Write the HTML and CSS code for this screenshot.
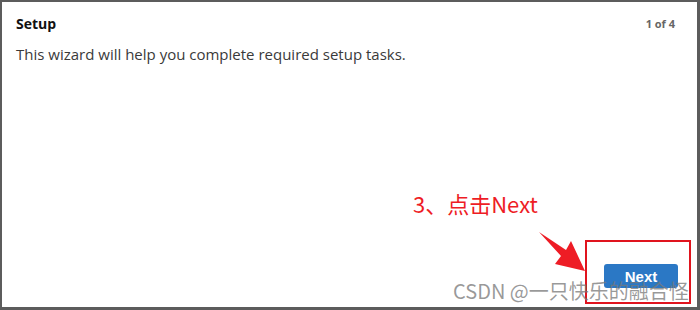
FILE: index.html
```html
<!DOCTYPE html>
<html lang="en">
  <head>
    <meta charset="UTF-8" />
    <title>Setup</title>
    <link rel="stylesheet" href="styles.css">
  </head>
  <body>
    <div class="wizard">
      <div class="wizard-header">
        <h2 class="wizard-title">Setup</h2>
        <span class="wizard-step">1 of 4</span>
      </div>
      <p class="wizard-text">This wizard will help you complete required setup tasks.</p>
      <div class="wizard-footer">
        <button class="btn-next">Next</button>
      </div>

      <div class="note">3、点击Next</div>
      <svg class="arrow" width="60" height="50" viewBox="536 228 60 50">
        <polygon points="539,232 566,250 571,241 585,271 555,264 561,256" fill="#ee1c25" />
      </svg>
      <div class="highlight"></div>
      <div class="watermark">CSDN @一只快乐的融合怪</div>
    </div>
  </body>
</html>
```

FILE: styles.css
```css
html, body {
  margin: 0;
  padding: 0;
  background-color: #fff;
}

.wizard {
  position: relative;
  box-sizing: border-box;
  width: 700px;
  height: 310px;
  border: 2px solid #5c5c5c;
  border-right-width: 3px;
  border-bottom-width: 3px;
  display: flex;
  flex-direction: column;
  font-family: "Open Sans", "Liberation Sans", sans-serif;
  color: #333;
}

.wizard-header {
  display: flex;
  justify-content: space-between;
  align-items: center;
  padding: 12px 22px 0 14px;
}

.wizard-title {
  margin: 0;
  font-size: 14px;
  font-weight: 700;
  color: #111;
}

.wizard-step {
  font-size: 11px;
  font-weight: 700;
  color: #666;
}

.wizard-text {
  margin: 11px 0 0 14px;
  font-size: 15px;
  color: #3a3a3a;
}

.wizard-footer {
  margin-top: auto;
  display: flex;
  justify-content: flex-end;
  padding: 0 19px 19px 0;
}

.btn-next {
  width: 74px;
  height: 24px;
  border: none;
  border-radius: 3px;
  background-color: #2b78c5;
  color: #fff;
  font-family: "Liberation Sans", Arial, sans-serif;
  font-size: 15px;
  font-weight: 700;
  padding: 0;
}

.note {
  position: absolute;
  left: 411px;
  top: 185px;
  font-family: "Noto Sans CJK SC", sans-serif;
  font-size: 22px;
  color: #ee1c25;
}

.arrow {
  position: absolute;
  left: 534px;
  top: 226px;
}

.highlight {
  position: absolute;
  left: 583px;
  top: 238px;
  width: 102px;
  height: 60px;
  border: 2px solid #e0141e;
}

.watermark {
  position: absolute;
  left: 451px;
  top: 274px;
  font-family: "Noto Sans CJK SC", sans-serif;
  font-size: 20px;
  color: rgba(120, 120, 120, 0.75);
  white-space: nowrap;
}
```
